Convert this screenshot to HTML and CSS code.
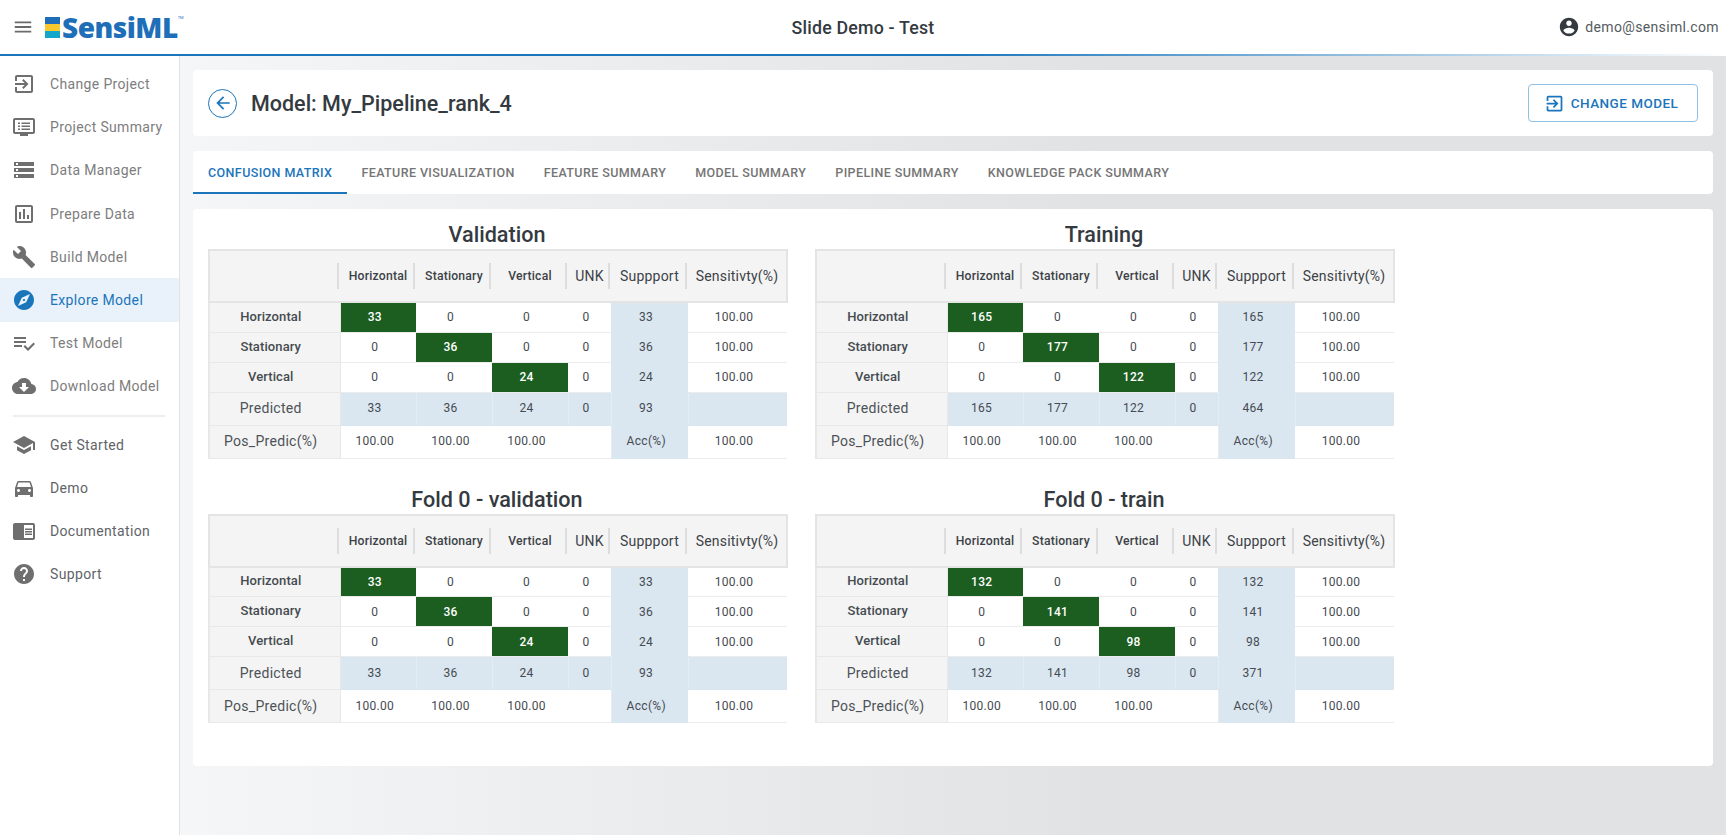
FILE: index.html
```html
<!DOCTYPE html>
<html lang="en">
<head>
<meta charset="utf-8">
<title>SensiML - Slide Demo</title>
<link rel="stylesheet" href="styles.css">
</head>
<body>
<header class="topbar">
  <div class="brand">
    <svg class="menu-icon" viewBox="0 0 24 24"><path d="M3 18h18v-2H3v2zm0-5h18v-2H3v2zm0-7v2h18V6H3z"/></svg>
    <div class="logo">
      <div class="logo-bars"><i class="bar-blue"></i><i class="bar-yellow"></i><i class="bar-teal"></i></div>
      <span class="logo-text">SensiML</span><span class="logo-tm">TM</span>
    </div>
  </div>
  <div class="app-title">Slide Demo - Test</div>
  <div class="user">
    <svg class="user-icon" viewBox="0 0 24 24"><path d="M12 2C6.48 2 2 6.48 2 12s4.48 10 10 10 10-4.48 10-10S17.52 2 12 2zm0 3c1.66 0 3 1.34 3 3s-1.34 3-3 3-3-1.34-3-3 1.34-3 3-3zm0 14.2c-2.5 0-4.71-1.28-6-3.22.03-1.99 4-3.08 6-3.08 1.99 0 5.97 1.09 6 3.08-1.29 1.94-3.5 3.22-6 3.22z"/></svg>
    <span>demo@sensiml.com</span>
  </div>
</header>
<div class="layout">
  <nav class="sidebar">
    <a class="nav-item"><svg viewBox="0 0 24 24"><path d="M10.09 15.59L11.5 17l5-5-5-5-1.41 1.41L12.67 11H3v2h9.67l-2.58 2.59zM19 3H5c-1.11 0-2 .9-2 2v4h2V5h14v14H5v-4H3v4c0 1.1.89 2 2 2h14c1.1 0 2-.9 2-2V5c0-1.1-.9-2-2-2z"/></svg><span>Change Project</span></a>
    <a class="nav-item"><svg viewBox="0 0 24 24"><path d="M21 3H3c-1.1 0-2 .9-2 2v12c0 1.1.9 2 2 2h5v2h8v-2h5c1.1 0 2-.9 2-2V5c0-1.100-.9-2-2-2zm0 14H3V5h18v12zM6 7.500h2v1.500H6zm0 3h2V12H6zm0 3h2V15H6zM9.500 7.500H18v1.500H9.500zm0 3H18V12H9.500zm0 3H18V15H9.500z"/></svg><span>Project Summary</span></a>
    <a class="nav-item"><svg viewBox="0 0 24 24"><path d="M2 20h20v-4H2v4zm2-3h2v2H4v-2zM2 4v4h20V4H2zm4 3H4V5h2v2zm-4 7h20v-4H2v4zm2-3h2v2H4v-2z"/></svg><span>Data Manager</span></a>
    <a class="nav-item"><svg viewBox="0 0 24 24"><path d="M19 3H5c-1.100 0-2 .9-2 2v14c0 1.100.9 2 2 2h14c1.100 0 2-.9 2-2V5c0-1.100-.9-2-2-2zm0 16H5V5h14v14zM7 10h2v7H7zM11 7h2v10h-2zM15 13h2v4h-2z"/></svg><span>Prepare Data</span></a>
    <a class="nav-item"><svg viewBox="0 0 24 24"><path d="M22.700 19l-9.100-9.100c.9-2.300.4-5-1.500-6.900-2-2-5-2.400-7.400-1.300L9 6 6 9 1.600 4.700C.4 7.100.9 10.100 2.900 12.100c1.900 1.900 4.600 2.400 6.900 1.500l9.100 9.100c.4.4 1 .4 1.400 0l2.300-2.300c.5-.4.5-1.100.1-1.400z"/></svg><span>Build Model</span></a>
    <a class="nav-item active"><svg viewBox="0 0 24 24"><path d="M12 10.900c-.61 0-1.100.49-1.100 1.100s.49 1.100 1.100 1.100c.61 0 1.100-.49 1.100-1.100s-.49-1.100-1.100-1.100zM12 2C6.480 2 2 6.480 2 12s4.480 10 10 10 10-4.480 10-10S17.520 2 12 2zm2.190 12.190L6 18l3.810-8.190L18 6l-3.810 8.190z"/></svg><span>Explore Model</span></a>
    <a class="nav-item"><svg viewBox="0 0 24 24"><path d="M14 10H2v2h12v-2zm0-4H2v2h12V6zM2 16h8v-2H2v2zm19.500-4.500L23 13l-6.990 7-4.510-4.500L13 14l3.010 3 5.490-5.500z"/></svg><span>Test Model</span></a>
    <a class="nav-item"><svg viewBox="0 0 24 24"><path d="M19.350 10.040C18.670 6.590 15.640 4 12 4 9.110 4 6.600 5.640 5.350 8.040 2.340 8.360 0 10.910 0 14c0 3.310 2.690 6 6 6h13c2.760 0 5-2.240 5-5 0-2.640-2.050-4.780-4.650-4.960zM17 13l-5 5-5-5h3V9h4v4h3z"/></svg><span>Download Model</span></a>
    <hr class="nav-divider">
    <a class="nav-item dark"><svg viewBox="0 0 24 24"><path d="M5 13.180v4L12 21l7-3.820v-4L12 17l-7-3.820zM12 3L1 9l11 6 9-4.910V17h2V9L12 3z"/></svg><span>Get Started</span></a>
    <a class="nav-item dark"><svg viewBox="0 0 24 24"><path d="M18.920 6.010C18.720 5.420 18.160 5 17.500 5h-11c-.66 0-1.210.42-1.420 1.010L3 12v8c0 .55.45 1 1 1h1c.55 0 1-.45 1-1v-1h12v1c0 .55.45 1 1 1h1c.55 0 1-.45 1-1v-8l-2.080-5.990zM6.500 16c-.83 0-1.500-.67-1.500-1.500S5.670 13 6.500 13s1.500.67 1.500 1.500S7.330 16 6.500 16zm11 0c-.83 0-1.500-.67-1.500-1.500s.67-1.500 1.500-1.500 1.500.67 1.500 1.500-.67 1.500-1.500 1.500zM5 11l1.500-4.500h11L19 11H5z"/></svg><span>Demo</span></a>
    <a class="nav-item dark"><svg viewBox="0 0 24 24"><path d="M13 12h7v1.500h-7zm0-2.500h7V11h-7zm0 5h7V16h-7zM21 4H3c-1.100 0-2 .9-2 2v13c0 1.100.9 2 2 2h18c1.100 0 2-.9 2-2V6c0-1.100-.9-2-2-2zm0 15h-9V6h9v13z"/></svg><span>Documentation</span></a>
    <a class="nav-item dark"><svg viewBox="0 0 24 24"><path d="M12 2C6.480 2 2 6.480 2 12s4.480 10 10 10 10-4.480 10-10S17.520 2 12 2zm1 17h-2v-2h2v2zm2.070-7.750l-.9.92C13.450 12.900 13 13.500 13 15h-2v-.5c0-1.100.45-2.100 1.170-2.830l1.240-1.260c.37-.36.59-.86.59-1.410 0-1.100-.9-2-2-2s-2 .9-2 2H8c0-2.210 1.790-4 4-4s4 1.790 4 4c0 .88-.36 1.680-.93 2.250z"/></svg><span>Support</span></a>
  </nav>
  <main class="main">
    <section class="card title-card">
      <div class="title-left">
        <span class="back-btn"><svg viewBox="0 0 24 24"><path d="M20 11H7.830l5.590-5.590L12 4l-8 8 8 8 1.410-1.410L7.830 13H20v-2z"/></svg></span>
        <h1 class="page-title">Model: My_Pipeline_rank_4</h1>
      </div>
      <button class="change-btn"><svg viewBox="0 0 24 24"><path d="M10.090 15.590L11.500 17l5-5-5-5-1.410 1.410L12.670 11H3v2h9.670l-2.580 2.590zM19 3H5c-1.110 0-2 .9-2 2v4h2V5h14v14H5v-4H3v4c0 1.100.89 2 2 2h14c1.100 0 2-.9 2-2V5c0-1.100-.9-2-2-2z"/></svg>CHANGE MODEL</button>
    </section>
    <section class="card tabs">
      <span class="tab active">Confusion Matrix</span>
      <span class="tab">Feature Visualization</span>
      <span class="tab">Feature Summary</span>
      <span class="tab">Model Summary</span>
      <span class="tab">Pipeline Summary</span>
      <span class="tab">Knowledge Pack Summary</span>
    </section>
    <section class="card panel">
      <div class="matrix">
        <h2 class="matrix-title">Validation</h2>
        <table>
          <thead><tr><th class="c-label"></th><th class="c-class">Horizontal</th><th class="c-class">Stationary</th><th class="c-class">Vertical</th><th class="c-unk big">UNK</th><th class="c-sup big">Suppport</th><th class="c-sens big">Sensitivty(%)</th></tr></thead>
          <tbody>
            <tr><th>Horizontal</th><td class="hit">33</td><td>0</td><td>0</td><td>0</td><td class="tint">33</td><td>100.00</td></tr>
            <tr><th>Stationary</th><td>0</td><td class="hit">36</td><td>0</td><td>0</td><td class="tint">36</td><td>100.00</td></tr>
            <tr><th>Vertical</th><td>0</td><td>0</td><td class="hit">24</td><td>0</td><td class="tint">24</td><td>100.00</td></tr>
            <tr class="foot"><th>Predicted</th><td class="tint">33</td><td class="tint">36</td><td class="tint">24</td><td class="tint">0</td><td class="tint">93</td><td class="tint"></td></tr>
            <tr class="foot"><th>Pos_Predic(%)</th><td>100.00</td><td>100.00</td><td>100.00</td><td></td><td class="tint">Acc(%)</td><td>100.00</td></tr>
          </tbody>
        </table>
      </div>
      <div class="matrix">
        <h2 class="matrix-title">Training</h2>
        <table>
          <thead><tr><th class="c-label"></th><th class="c-class">Horizontal</th><th class="c-class">Stationary</th><th class="c-class">Vertical</th><th class="c-unk big">UNK</th><th class="c-sup big">Suppport</th><th class="c-sens big">Sensitivty(%)</th></tr></thead>
          <tbody>
            <tr><th>Horizontal</th><td class="hit">165</td><td>0</td><td>0</td><td>0</td><td class="tint">165</td><td>100.00</td></tr>
            <tr><th>Stationary</th><td>0</td><td class="hit">177</td><td>0</td><td>0</td><td class="tint">177</td><td>100.00</td></tr>
            <tr><th>Vertical</th><td>0</td><td>0</td><td class="hit">122</td><td>0</td><td class="tint">122</td><td>100.00</td></tr>
            <tr class="foot"><th>Predicted</th><td class="tint">165</td><td class="tint">177</td><td class="tint">122</td><td class="tint">0</td><td class="tint">464</td><td class="tint"></td></tr>
            <tr class="foot"><th>Pos_Predic(%)</th><td>100.00</td><td>100.00</td><td>100.00</td><td></td><td class="tint">Acc(%)</td><td>100.00</td></tr>
          </tbody>
        </table>
      </div>
      <div class="matrix">
        <h2 class="matrix-title">Fold 0 - validation</h2>
        <table>
          <thead><tr><th class="c-label"></th><th class="c-class">Horizontal</th><th class="c-class">Stationary</th><th class="c-class">Vertical</th><th class="c-unk big">UNK</th><th class="c-sup big">Suppport</th><th class="c-sens big">Sensitivty(%)</th></tr></thead>
          <tbody>
            <tr><th>Horizontal</th><td class="hit">33</td><td>0</td><td>0</td><td>0</td><td class="tint">33</td><td>100.00</td></tr>
            <tr><th>Stationary</th><td>0</td><td class="hit">36</td><td>0</td><td>0</td><td class="tint">36</td><td>100.00</td></tr>
            <tr><th>Vertical</th><td>0</td><td>0</td><td class="hit">24</td><td>0</td><td class="tint">24</td><td>100.00</td></tr>
            <tr class="foot"><th>Predicted</th><td class="tint">33</td><td class="tint">36</td><td class="tint">24</td><td class="tint">0</td><td class="tint">93</td><td class="tint"></td></tr>
            <tr class="foot"><th>Pos_Predic(%)</th><td>100.00</td><td>100.00</td><td>100.00</td><td></td><td class="tint">Acc(%)</td><td>100.00</td></tr>
          </tbody>
        </table>
      </div>
      <div class="matrix">
        <h2 class="matrix-title">Fold 0 - train</h2>
        <table>
          <thead><tr><th class="c-label"></th><th class="c-class">Horizontal</th><th class="c-class">Stationary</th><th class="c-class">Vertical</th><th class="c-unk big">UNK</th><th class="c-sup big">Suppport</th><th class="c-sens big">Sensitivty(%)</th></tr></thead>
          <tbody>
            <tr><th>Horizontal</th><td class="hit">132</td><td>0</td><td>0</td><td>0</td><td class="tint">132</td><td>100.00</td></tr>
            <tr><th>Stationary</th><td>0</td><td class="hit">141</td><td>0</td><td>0</td><td class="tint">141</td><td>100.00</td></tr>
            <tr><th>Vertical</th><td>0</td><td>0</td><td class="hit">98</td><td>0</td><td class="tint">98</td><td>100.00</td></tr>
            <tr class="foot"><th>Predicted</th><td class="tint">132</td><td class="tint">141</td><td class="tint">98</td><td class="tint">0</td><td class="tint">371</td><td class="tint"></td></tr>
            <tr class="foot"><th>Pos_Predic(%)</th><td>100.00</td><td>100.00</td><td>100.00</td><td></td><td class="tint">Acc(%)</td><td>100.00</td></tr>
          </tbody>
        </table>
      </div>
    </section>
  </main>
</div>
</body>
</html>
```
FILE: styles.css
```css
* { box-sizing: border-box; }
html, body { margin: 0; height: 100%; }
body {
  width: 1726px;
  height: 835px;
  overflow: hidden;
  display: flex;
  flex-direction: column;
  font-family: Roboto, "Liberation Sans", sans-serif;
  color: #343a40;
  background: #fff;
}

/* top bar */
.topbar {
  height: 56px;
  flex: none;
  display: grid;
  grid-template-columns: 1fr auto 1fr;
  align-items: center;
  padding: 0 7px 2px 12px;
  background-color: #fff;
  background-image: linear-gradient(90deg, #1b75bb 0%, #1b75bb 55%, #e6f1f9 95%, #ffffff 100%);
  background-repeat: no-repeat;
  background-position: left bottom;
  background-size: 100% 2px;
}
.brand { display: flex; align-items: center; }
.menu-icon { width: 22px; height: 22px; fill: #6b6b6b; margin-right: 11px; }
.logo { display: flex; align-items: center; }
.logo-bars { width: 15px; height: 21px; display: flex; flex-direction: column; margin-right: 2px; }
.logo-bars i { display: block; }
.bar-blue { height: 7px; background: #1f6fb8; }
.bar-yellow { height: 7px; background: #f8c92e; }
.bar-teal { height: 7px; background: #14a7c9; }
.logo-text {
  font-family: "Open Sans", sans-serif;
  font-weight: 800;
  font-size: 28px;
  line-height: 28px;
  letter-spacing: -.5px;
  color: #1f6fb8;
}
.logo-tm { font-size: 4px; line-height: 4px; color: #1f6fb8; align-self: flex-start; margin: 3px 0 0 0; }
.app-title { font-size: 17.800px; font-weight: 500; color: #343a40; letter-spacing: .2px; margin-right: 5px; }
.user { justify-self: end; display: flex; align-items: center; gap: 5px; font-size: 14px; color: #555b60; letter-spacing: .35px; }
.user-icon { width: 22px; height: 22px; fill: #343a40; }

/* layout */
.layout { flex: 1; display: flex; min-height: 0; }
.sidebar {
  width: 180px;
  flex: none;
  padding-top: 6.500px;
  background: #fff;
  border-right: 1px solid #e2e2e2;
}
.nav-item {
  height: 43.200px;
  display: flex;
  align-items: center;
  gap: 14px;
  padding-left: 12px;
  font-size: 14px;
  letter-spacing: .35px;
  color: #7d7d7d;
}
.nav-item svg { width: 24px; height: 24px; fill: #6f6f6f; flex: none; }
.nav-item.dark { color: #5f6468; }
.nav-item.active { background: #e9f2fa; color: #1b75bb; }
.nav-item.active svg { fill: #1b75bb; }
.nav-divider { border: 0; height: 2px; background: #eeeeee; margin: 7px 14px 6px 13px; }

/* main */
.main {
  flex: 1;
  min-width: 0;
  padding: 14px 13px 0;
  background: linear-gradient(90deg, #f5f6f8 0%, #e1e2e4 60%, #e1e2e4 100%);
  display: flex;
  flex-direction: column;
  gap: 15px;
}
.card { background: #fff; border-radius: 4px; }
.title-card {
  height: 66px;
  display: flex;
  align-items: center;
  justify-content: space-between;
  padding: 0 15px;
}
.title-left { display: flex; align-items: center; gap: 14px; }
.back-btn {
  width: 29px;
  height: 29px;
  border: 1px solid #1b75bb;
  border-radius: 50%;
  display: flex;
  align-items: center;
  justify-content: center;
}
.back-btn svg { width: 20px; height: 20px; fill: #1b75bb; }
.page-title { margin: 0; font-size: 21.500px; font-weight: 500; color: #343a40; }
.change-btn {
  width: 170px;
  height: 38px;
  display: flex;
  align-items: center;
  justify-content: center;
  gap: 6px;
  background: #fff;
  border: 1px solid #90c0e3;
  border-radius: 4px;
  font: 500 13.500px Roboto, sans-serif;
  letter-spacing: .45px;
  color: #1b75bb;
  padding: 0 4px 0 0;
}
.change-btn svg { width: 21px; height: 21px; fill: #1b75bb; }

/* tabs */
.tabs { height: 43px; display: flex; }
.tab {
  height: 43px;
  padding: 0 15px 0 14px;
  display: flex;
  align-items: center;
  font-size: 12.500px;
  font-weight: 500;
  text-transform: uppercase;
  letter-spacing: .4px;
  color: #757575;
}
.tab.active { color: #1b75bb; border-bottom: 2px solid #1b75bb; padding: 2px 15px 0; }

/* panel */
.panel {
  height: 557px;
  padding: 13px 15px 0;
  display: grid;
  grid-template-columns: 578px 578px;
  grid-auto-rows: min-content;
  column-gap: 29px;
  row-gap: 28px;
}
.matrix-title { margin: 0 0 1px; font-size: 21.600px; line-height: 26px; font-weight: 500; text-align: center; color: #343a40; }
table { width: 578px; table-layout: fixed; border-collapse: collapse; font-size: 12px; color: #454b50; }
thead tr { height: 52px; }
tbody tr { height: 30px; }
tbody tr.foot { height: 33px; }
thead th {
  border-top: 2px solid #e4e4e4;
  border-bottom: 2px solid #e4e4e4;
  background-color: #f4f4f4;
  background-image: linear-gradient(#dddddd, #dddddd);
  background-repeat: no-repeat;
  background-position: right 1px center;
  background-size: 2px 26px;
  font-weight: 500;
  font-size: 12.200px;
  letter-spacing: .2px;
  padding: 0;
  color: #3c4247;
}
thead th:first-child { border-left: 2px solid #e4e4e4; }
thead th:last-child { border-right: 2px solid #e4e4e4; background-image: none; }
thead th.big { font-weight: 400; font-size: 14px; }
.c-label { width: 131px; }
.c-class { width: 76px; }
.c-unk { width: 43px; }
.c-sup { width: 77px; }
.c-sens { width: 99px; }
tbody th {
  background: #f4f4f4;
  border: 1px solid #e8e8e8;
  border-left: 2px solid #e8e8e8;
  font-weight: 500;
  font-size: 13px;
  letter-spacing: .1px;
  color: #454b50;
  padding: 0 8px 2px 0;
}
tbody tr.foot th { font-weight: 400; font-size: 14px; color: #4c5257; letter-spacing: .3px; padding-bottom: 1px; }
td { border-bottom: 1px solid #ececec; text-align: center; padding: 0 7px 0 0; letter-spacing: .3px; }
tr.foot td { padding-bottom: 1px; }
td.hit { background: #1b5e20; color: #fff; font-weight: 500; }
td.tint { background: #dae6f0; border-bottom-color: #dae6f0; }
tr.foot td.tint { border-left: 1px solid #e4edf4; }
tr.foot td.tint:first-of-type { border-left: 0; }
```
